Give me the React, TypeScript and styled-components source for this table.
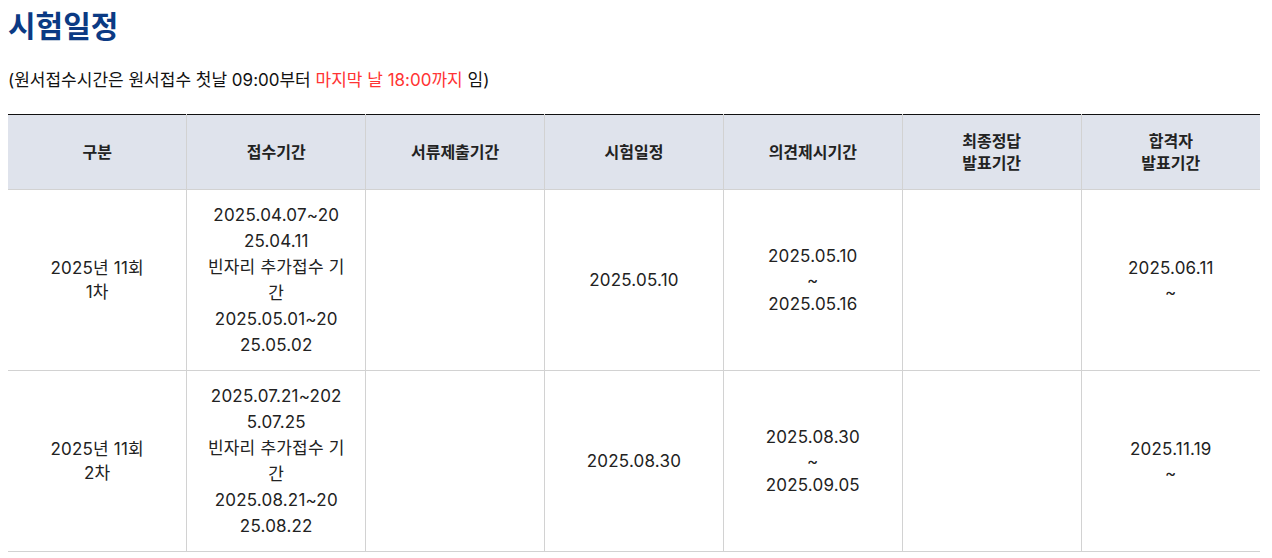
import React from "react";
import styled, { createGlobalStyle } from "styled-components";

const GlobalStyle = createGlobalStyle`
  body {
    margin: 8px 12px 8px 8px;
    background: #fff;
    font-family: "Inter", "Noto Sans CJK KR", sans-serif;
    color: #222;
  }
`;

const Title = styled.h1`
  margin: 0;
  font-size: 30px;
  line-height: 36px;
  font-weight: 700;
  color: #0b3a84;
`;

const Notice = styled.p`
  margin: 24px 0 22px;
  font-size: 17px;
  line-height: 24px;
  color: #111;
`;

const Red = styled.span`
  color: #ff3434;
`;

const Table = styled.table`
  width: 100%;
  border-collapse: collapse;
  table-layout: fixed;
  border-top: 1px solid #111;
  font-size: 17px;
`;

const Th = styled.th`
  background: #dfe3ec;
  border: 1px solid #d2d2d2;
  border-top: none;
  padding: 15px 10px;
  font-size: 16px;
  line-height: 22px;
  font-weight: 700;
  color: #222;
  &:first-child { border-left: none; }
  &:last-child { border-right: none; }
`;

const Td = styled.td<{ $tall?: boolean }>`
  border: 1px solid #d2d2d2;
  padding: 12px 6px;
  text-align: center;
  vertical-align: middle;
  line-height: ${p => (p.$tall ? "26px" : "24px")};
  color: #222;
  letter-spacing: 0.2px;
  &:first-child { border-left: none; }
  &:last-child { border-right: none; }
`;

const Line = styled.span`
  display: block;
  white-space: nowrap;
`;

type Row = {
  term: string[];
  apply: string[];
  exam: string;
  objection: string[];
  pass: string[];
};

const rows: Row[] = [
  {
    term: ["2025년 11회", "1차"],
    apply: ["2025.04.07~20", "25.04.11", "빈자리 추가접수 기", "간", "2025.05.01~20", "25.05.02"],
    exam: "2025.05.10",
    objection: ["2025.05.10", "~", "2025.05.16"],
    pass: ["2025.06.11", "~"],
  },
  {
    term: ["2025년 11회", "2차"],
    apply: ["2025.07.21~202", "5.07.25", "빈자리 추가접수 기", "간", "2025.08.21~20", "25.08.22"],
    exam: "2025.08.30",
    objection: ["2025.08.30", "~", "2025.09.05"],
    pass: ["2025.11.19", "~"],
  },
];

const Lines = ({ items }: { items: string[] }) => (
  <>
    {items.map((t, i) => (
      <Line key={i}>{t}</Line>
    ))}
  </>
);

const App = () => (
  <>
    <GlobalStyle />
    <Title>시험일정</Title>
    <Notice>
      (원서접수시간은 원서접수 첫날 09:00부터 <Red>마지막 날 18:00까지</Red> 임)
    </Notice>
    <Table>
      <thead>
        <tr>
          <Th>구분</Th>
          <Th>접수기간</Th>
          <Th>서류제출기간</Th>
          <Th>시험일정</Th>
          <Th>의견제시기간</Th>
          <Th>
            최종정답
            <br />
            발표기간
          </Th>
          <Th>
            합격자
            <br />
            발표기간
          </Th>
        </tr>
      </thead>
      <tbody>
        {rows.map((r, i) => (
          <tr key={i}>
            <Td>
              <Lines items={r.term} />
            </Td>
            <Td $tall>
              <Lines items={r.apply} />
            </Td>
            <Td />
            <Td>{r.exam}</Td>
            <Td>
              <Lines items={r.objection} />
            </Td>
            <Td />
            <Td>
              <Lines items={r.pass} />
            </Td>
          </tr>
        ))}
      </tbody>
    </Table>
  </>
);

export default App;
